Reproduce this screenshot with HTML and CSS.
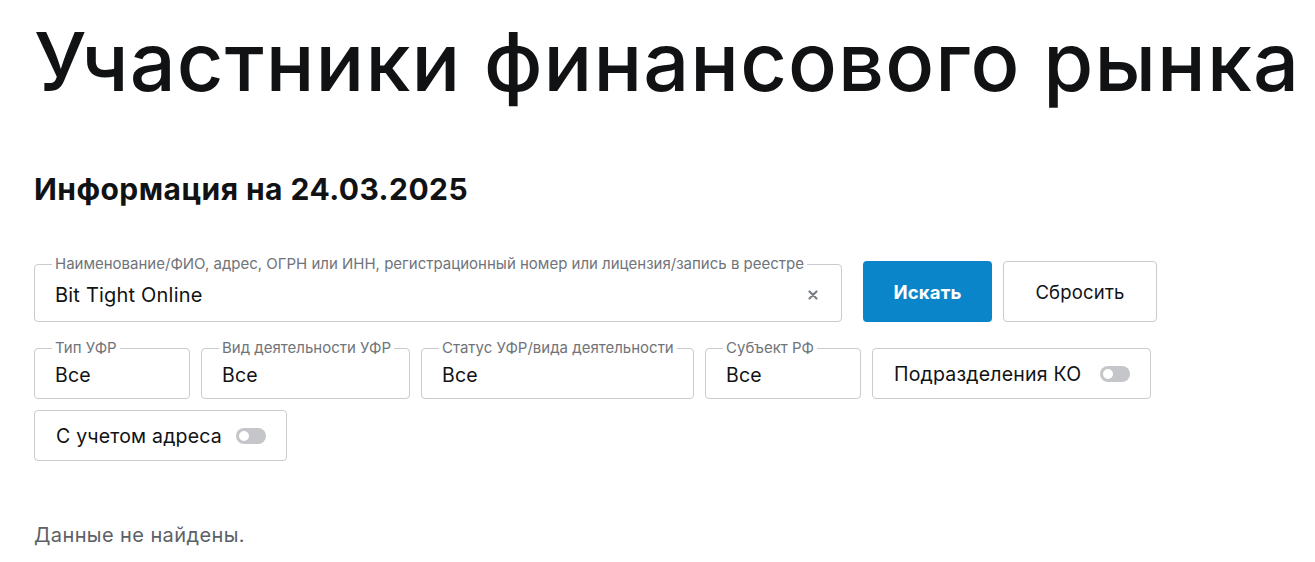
FILE: index.html
```html
<!DOCTYPE html>
<html lang="ru">
<head>
  <meta charset="UTF-8" />
  <meta name="viewport" content="width=device-width, initial-scale=1.0"/>
  <title>Участники финансового рынка</title>
  <link rel="stylesheet" href="styles.css">
</head>
<body>
  <div class="page">
    <h1>Участники финансового рынка</h1>
    <h2>Информация на 24.03.2025</h2>

    <div class="search-row">
      <fieldset class="field field-search">
        <legend>Наименование/ФИО, адрес, ОГРН или ИНН, регистрационный номер или лицензия/запись в реестре</legend>
        <div class="field-value search-value">
          <span>Bit Tight Online</span>
          <svg class="clear" width="10" height="10" viewBox="0 0 10 10">
            <path d="M1.5 1.5 L8.5 8.5 M8.5 1.5 L1.5 8.5" stroke="#7b8087" stroke-width="2.2" stroke-linecap="round"/>
          </svg>
        </div>
      </fieldset>
      <div class="buttons">
        <button class="btn btn-primary">Искать</button>
        <button class="btn btn-secondary">Сбросить</button>
      </div>
    </div>

    <div class="filters">
      <fieldset class="field w-type">
        <legend>Тип УФР</legend>
        <div class="field-value">Все</div>
      </fieldset>
      <fieldset class="field w-kind">
        <legend>Вид деятельности УФР</legend>
        <div class="field-value">Все</div>
      </fieldset>
      <fieldset class="field w-status">
        <legend>Статус УФР/вида деятельности</legend>
        <div class="field-value">Все</div>
      </fieldset>
      <fieldset class="field w-region">
        <legend>Субъект РФ</legend>
        <div class="field-value">Все</div>
      </fieldset>
      <label class="toggle-box w-ko">
        <span>Подразделения КО</span>
        <span class="switch"></span>
      </label>
      <label class="toggle-box w-addr">
        <span>С учетом адреса</span>
        <span class="switch"></span>
      </label>
    </div>

    <p class="empty">Данные не найдены.</p>
  </div>
</body>
</html>
```

FILE: styles.css
```css
body {
  margin: 0;
  background: #fff;
  font-family: 'Inter', 'Noto Sans', sans-serif;
  color: #111214;
}
.page {
  padding: 0 34px;
}
h1 {
  margin: 22px 0 0;
  font-size: 81px;
  line-height: 81px;
  font-weight: 500;
  letter-spacing: 1.1px;
  white-space: nowrap;
}
h2 {
  margin: 70px 0 0;
  font-size: 30px;
  line-height: 32px;
  font-weight: 700;
  letter-spacing: 0.45px;
}
.search-row {
  display: flex;
  align-items: flex-end;
  margin-top: 51px;
}
.field {
  margin: 0;
  padding: 0 20px 0 20px;
  border: 1px solid #c9cbce;
  border-radius: 4px;
  box-sizing: border-box;
  min-width: 0;
}
.field legend {
  font-size: 15px;
  line-height: 16px;
  color: #6f747a;
  padding: 0 3px;
  margin-left: -3px;
  white-space: nowrap;
}
.field-value {
  height: 42px;
  line-height: 38px;
  font-size: 19.5px;
  letter-spacing: 0.2px;
}
.field-search {
  width: 808px;
}
.search-value {
  height: 49px;
  line-height: 46px;
  font-size: 20px;
  display: flex;
  justify-content: space-between;
  align-items: center;
  padding-bottom: 3px;
  box-sizing: border-box;
}
.clear {
  margin-right: 3px;
}
.buttons {
  display: flex;
  gap: 11px;
  margin-left: 21px;
}
.btn {
  height: 61px;
  border-radius: 4px;
  font-family: inherit;
  font-size: 18.5px;
  letter-spacing: 0.2px;
  cursor: pointer;
}
.btn-primary {
  width: 129px;
  background: #0a85c9;
  border: none;
  color: #fff;
  font-weight: 700;
}
.btn-secondary {
  width: 154px;
  background: #fff;
  border: 1px solid #c9cbce;
  color: #111214;
}
.filters {
  display: flex;
  flex-wrap: wrap;
  align-items: flex-end;
  gap: 11px;
  margin-top: 18px;
}
.w-type { width: 156px; }
.w-kind { width: 209px; }
.w-status { width: 273px; }
.w-region { width: 156px; }
.w-ko { width: 279px; }
.w-addr { width: 253px; }
.toggle-box {
  height: 51px;
  box-sizing: border-box;
  border: 1px solid #c9cbce;
  border-radius: 4px;
  display: flex;
  align-items: center;
  justify-content: space-between;
  padding: 0 20px 0 21px;
  font-size: 19.5px;
  letter-spacing: 0.2px;
  white-space: nowrap;
}
.switch {
  width: 30px;
  height: 16px;
  border-radius: 8px;
  background: #c4c6c9;
  position: relative;
  flex-shrink: 0;
}
.switch::after {
  content: "";
  position: absolute;
  left: 3px;
  top: 3px;
  width: 10px;
  height: 10px;
  border-radius: 50%;
  background: #fff;
}
.empty {
  margin: 62px 0 0;
  font-size: 20px;
  line-height: 24px;
  letter-spacing: 0.4px;
  color: #5c6168;
}
```
